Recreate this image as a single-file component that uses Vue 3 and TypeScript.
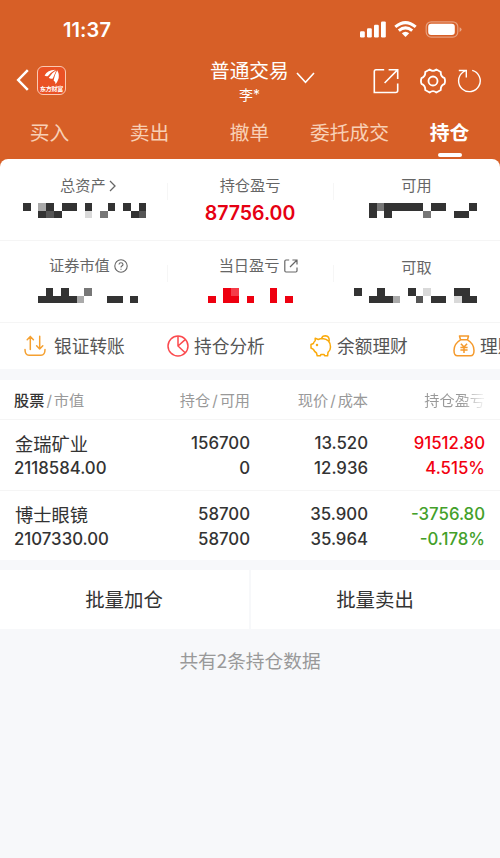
<script setup lang="ts">
interface Cell { x: number; y: number; c: string }
interface Holding {
  name: string
  value: string
  amount: string
  usable: string
  price: string
  cost: string
  profit: string
  rate: string
  trend: 'up' | 'down'
}

const SIZE = 7.7
const shades: Record<string, string> = {
  d: '#333333', m: '#555555', g: '#777777', l: '#aaaaaa', w: '#d9d9d9', r: '#ee0010', p: '#f53c48',
}

// Each mask is two rows of cells; a dot is an empty cell.
function mask(rows: string[]): Cell[] {
  const cells: Cell[] = []
  rows.forEach((row, y) => {
    row.split('').forEach((key, x) => {
      if (key !== '.') cells.push({ x: x * SIZE, y: y * SIZE, c: shades[key] })
    })
  })
  return cells
}

const masks = {
  total: mask(['d.ld.dd.d..d.d.d', '..dmd...w.g...dm']),
  market: mask(['.d.d..g......', 'dddddl...dd.d']),
  today: mask(['..rp....r..', 'r.rr.r..r.r']),
  usable: mask(['dgddddd.dd...d', 'd.d....g...dd.']),
  cash: mask(['d..d...d.w...dd.', '..dddl..m.dd.wdd']),
}

const tabs: string[] = ['买入', '卖出', '撤单', '委托成交', '持仓']

const holdings: Holding[] = [
  { name: '金瑞矿业', value: '2118584.00', amount: '156700', usable: '0', price: '13.520', cost: '12.936', profit: '91512.80', rate: '4.515%', trend: 'up' },
  { name: '博士眼镜', value: '2107330.00', amount: '58700', usable: '58700', price: '35.900', cost: '35.964', profit: '-3756.80', rate: '-0.178%', trend: 'down' },
]
</script>

<template>
  <div class="page">
    <header class="head">
      <div class="status">
        <span class="clock">11:37</span>
        <svg class="status-icons" width="104" height="20" viewBox="0 0 104 20">
          <g fill="#fff">
            <rect x="0" y="11.2" width="4.8" height="6.2" rx="1.2" />
            <rect x="7" y="8.2" width="4.8" height="9.2" rx="1.2" />
            <rect x="14" y="4.8" width="4.8" height="12.6" rx="1.2" />
            <rect x="21" y="1.4" width="4.8" height="16" rx="1.2" />
            <path d="M45.5 17 L41.8 13.2 Q45.5 10.1 49.2 13.2 Z" />
            <rect x="68.2" y="3.8" width="26.6" height="11.3" rx="3" />
          </g>
          <g fill="none" stroke="#fff" stroke-width="3">
            <path d="M35.3 6.9 Q45.5 -1.7 55.7 6.9" />
            <path d="M38.8 10.7 Q45.5 5 52.2 10.7" />
          </g>
          <rect x="66.2" y="1.8" width="31.6" height="15.3" rx="5" fill="none" stroke="#fff" stroke-opacity=".4" stroke-width="1.2" />
          <path d="M99.6 7.2 Q101.6 8 101.6 9.5 T99.6 11.9 Z" fill="#fff" fill-opacity=".45" />
        </svg>
      </div>

      <div class="nav">
        <div class="nav-left">
          <svg width="13" height="22" viewBox="0 0 13 22"><path d="M11.8 1.2 L2.2 11 L11.8 20.8" fill="none" stroke="#fff" stroke-width="2.5" /></svg>
          <span class="logo">
            <svg width="18" height="16" viewBox="0 0 18 16" fill="#fff">
              <path d="M1.6 6.4 Q4.4 1.2 12.4 .8 Q7.6 3.6 5 7 Q2.9 7.6 1.6 6.4Z" />
              <path d="M5.8 8.7 Q8.4 3.8 13.3 1.2 Q11.8 4.7 9.8 9.6 Q7.3 10.4 5.8 8.7Z" />
              <path d="M10.6 11.4 Q11.7 5.5 14.2 1.2 Q17 6 15 11 Q14 13.6 12.6 15.2 Q12.7 12.6 10.6 11.4Z" />
            </svg>
            <span class="logo-text">东方财富</span>
          </span>
        </div>
        <div class="account">
          <div class="account-name">普通交易<svg width="19" height="12" viewBox="0 0 19 12"><path d="M1 1 L9.5 10.4 L18 1" fill="none" stroke="#fff" stroke-width="1.6" /></svg></div>
          <div class="account-user">李*</div>
        </div>
        <div class="nav-right">
          <svg width="26" height="26" viewBox="0 0 26 26" fill="none" stroke="#fff" stroke-width="1.6">
            <path d="M11.2 1.7 H3 Q1.3 1.7 1.3 3.4 V24.5 H22.7 Q24.7 24.5 24.7 22.5 V15.5" />
            <path d="M15.6 1.7 H24.7 V11 M24.5 1.9 L11.6 15" />
          </svg>
          <svg class="gear" width="26" height="26" viewBox="0 0 27 27" fill="none" stroke="#fff" stroke-width="1.9" stroke-linejoin="round">
            <path d="M10 1.6 Q13.5 4.3 17 1.6 L21.6 4.2 Q21.1 8.6 25.5 10.6 Q26.5 13.5 25.5 16.4 Q21.1 18.4 21.6 22.8 L17 25.4 Q13.5 22.7 10 25.4 L5.4 22.8 Q5.9 18.4 1.5 16.4 Q.5 13.5 1.5 10.6 Q5.9 8.6 5.4 4.2 Z" />
            <circle cx="13.5" cy="13.5" r="4.7" />
          </svg>
          <svg class="refresh" width="25" height="25" viewBox="0 0 25 25" fill="none" stroke="#fff" stroke-width="1.4">
            <path d="M15.2 2.4 A10.8 10.8 0 1 1 6.2 4 L8.9 2.5 M1.8 2.5 H9.3 V9.4" />
          </svg>
        </div>
      </div>

      <nav class="tabs">
        <span v-for="(tab, i) in tabs" :key="tab" class="tab" :class="{ active: i === 4 }">{{ tab }}</span>
      </nav>
    </header>

    <section class="summary">
      <div class="sum-row">
        <div class="sum-cell first">
          <div class="label">总资产<svg width="9" height="12" viewBox="0 0 9 12"><path d="M2 1 L7 6 L2 11" fill="none" stroke="#666" stroke-width="1.3" /></svg></div>
          <svg class="mask total" width="124" height="16"><rect v-for="(p, i) in masks.total" :key="i" :x="p.x" :y="p.y" width="7.7" height="7.7" :fill="p.c" /></svg>
        </div>
        <div class="sum-cell">
          <div class="label">持仓盈亏</div>
          <div class="gain">87756.00</div>
        </div>
        <div class="sum-cell">
          <div class="label">可用</div>
          <svg class="mask usable" width="108" height="16"><rect v-for="(p, i) in masks.usable" :key="i" :x="p.x" :y="p.y" width="7.7" height="7.7" :fill="p.c" /></svg>
        </div>
      </div>
      <div class="sum-row second">
        <div class="sum-cell first">
          <div class="label">证券市值<svg class="help" width="14" height="14" viewBox="0 0 14 14" fill="none" stroke="#666" stroke-width="1.1"><circle cx="7" cy="7" r="6.2" /><path d="M5 5.5 Q5 3.7 7 3.7 Q9 3.7 9 5.4 Q9 6.4 7.8 7 Q7 7.5 7 8.5" /><path d="M7 9.7 V10.8" /></svg></div>
          <svg class="mask market" width="101" height="16"><rect v-for="(p, i) in masks.market" :key="i" :x="p.x" :y="p.y" width="7.7" height="7.7" :fill="p.c" /></svg>
        </div>
        <div class="sum-cell">
          <div class="label wide">当日盈亏<svg class="jump" width="14" height="14" viewBox="0 0 14 14" fill="none" stroke="#666" stroke-width="1.2"><path d="M5.2 1 H2 Q.8 1 .8 2.2 V11.8 Q.8 13 2 13 H11.8 Q13 13 13 11.8 V8.6 M8.4 1 H13 V5.6 M13 1 L6 8" /></svg></div>
          <svg class="mask today" width="85" height="16"><rect v-for="(p, i) in masks.today" :key="i" :x="p.x" :y="p.y" width="7.7" height="7.7" :fill="p.c" /></svg>
        </div>
        <div class="sum-cell">
          <div class="label low">可取</div>
          <svg class="mask cash" width="124" height="16"><rect v-for="(p, i) in masks.cash" :key="i" :x="p.x" :y="p.y" width="7.7" height="7.7" :fill="p.c" /></svg>
        </div>
      </div>
    </section>

    <section class="tools">
      <div class="tool">
        <svg width="22" height="22" viewBox="0 0 22 22" fill="none" stroke="#f5a030" stroke-width="1.5" stroke-linecap="round" stroke-linejoin="round"><path d="M1 14.5 Q1 20.2 5 20.2 H17 Q21 20.2 21 14.5 M6.3 14.5 V1.6 M3.2 4.8 L6.3 1.6 L9.4 4.8 M15.7 1.2 V14 M12.6 10.8 L15.7 14 L18.8 10.8" /></svg>
        <span>银证转账</span>
      </div>
      <div class="tool t2">
        <svg width="22" height="22" viewBox="0 0 22 22" fill="none" stroke="#fb4a4e" stroke-width="1.5"><circle cx="11" cy="11" r="10" /><path d="M11 1 V11 L18.4 18 M11 11 L18.2 4.6" /></svg>
        <span>持仓分析</span>
      </div>
      <div class="tool t3">
        <svg width="22" height="22" viewBox="0 0 22 22" fill="none" stroke="#faaa0c" stroke-width="1.5" stroke-linejoin="round"><path d="M5.2 3.3 L8.3 4.5 Q10 3.6 12.5 3.6 Q20.5 4.6 20.5 12 Q20.5 15.5 18 17.4 L17.6 20.8 H14.6 L14 19.4 H11 L10.3 20.8 H7.2 L6.5 18 Q4.3 16.6 3.4 14.4 L1 13 V9.5 L3.4 8.5 Q3.8 7 5.2 5.8 Z M11.5 3.6 Q12.2 .8 15.5 .8 Q19.6 1.2 19.2 6.3" /><circle cx="7" cy="10" r=".5" fill="#faaa0c" /></svg>
        <span>余额理财</span>
      </div>
      <div class="tool t4">
        <svg width="22" height="22" viewBox="0 0 22 22" fill="none" stroke="#f59a2c" stroke-width="1.5" stroke-linejoin="round"><path d="M6.5 1 H15.5 L14.5 4.7 H7.5 Z M7.5 4.8 Q1 8.6 1 15.4 Q1 20.8 4.5 20.8 H17.5 Q21 20.8 21 15.4 Q21 8.6 14.5 4.8 M7.9 8.7 L11 12 L14.1 8.7 M11 12 V18 M7.4 12.4 H14.6 M7.4 15 H14.6" /></svg>
        <span>理财</span>
      </div>
    </section>

    <section class="table">
      <div class="row thead">
        <div class="c1"><b>股票</b><i>/</i>市值</div>
        <div>持仓<i>/</i>可用</div>
        <div>现价<i>/</i>成本</div>
        <div class="fade">持仓盈亏</div>
      </div>
      <div v-for="h in holdings" :key="h.name" class="row item">
        <div class="c1"><p class="name">{{ h.name }}</p><p>{{ h.value }}</p></div>
        <div><p>{{ h.amount }}</p><p>{{ h.usable }}</p></div>
        <div><p>{{ h.price }}</p><p>{{ h.cost }}</p></div>
        <div :class="h.trend"><p>{{ h.profit }}</p><p>{{ h.rate }}</p></div>
      </div>
    </section>

    <section class="actions">
      <div class="action">批量加仓</div>
      <div class="action">批量卖出</div>
    </section>
    <footer class="foot">共有<span class="count">2</span>条持仓数据</footer>
  </div>
</template>

<style>
body { margin: 0; background: #f7f8fa; }
</style>

<style scoped>
.page { width: 500px; height: 858px; overflow: hidden; background: #f7f8fa; font-family: Inter, "Noto Sans CJK SC", sans-serif; color: #333; box-sizing: border-box; }
.page * { box-sizing: border-box; }
svg { display: block; flex: none; }
p { margin: 0; }

.head { height: 171px; background: #d75f27; color: #fff; }
.status { height: 56px; padding: 20px 37px 0 63px; display: flex; justify-content: space-between; }
.clock { font-size: 20px; line-height: 21px; font-weight: 600; letter-spacing: .1px; }
.status-icons { margin-right: -1px; }
.nav { height: 54px; display: grid; grid-template-columns: 200px 125px 175px; }
.nav-left { display: flex; align-items: flex-start; padding: 13px 0 0 16px; }
.logo { width: 29px; height: 29px; margin: -3px 0 0 8px; border: 1px solid #fac9b2; border-radius: 6px; background: #ea5124; display: flex; flex-direction: column; align-items: center; padding-top: 2px; }
.logo-text { font: 700 6px/8px "Noto Sans CJK SC", sans-serif; white-space: nowrap; letter-spacing: -.3px; }
.account { padding-left: 10px; }
.account-name { display: flex; align-items: center; gap: 7px; height: 30px; font-size: 19.7px; line-height: 31px; white-space: nowrap; }
.account-name svg { margin-top: 14px; }
.account-user { width: 79px; text-align: center; font-size: 14px; line-height: 18px; }
.nav-right { display: flex; padding: 12px 0 0 48px; }
.gear { margin-left: 21px; }
.refresh { margin-left: 11px; }
.tabs { display: grid; grid-template-columns: repeat(5, 100px); margin-left: -.5px; }
.tab { height: 49px; line-height: 47px; text-align: center; font-size: 19.8px; color: #f8d0b6; font-weight: 400; }
.tab.active { color: #fff; font-weight: 700; display: flex; flex-direction: column; align-items: center; }
.tab.active::after { content: ""; width: 24px; height: 4px; border-radius: 2px; background: #fff; margin-top: -4px; }

.summary { height: 164px; margin-top: -12px; background: #fff; border-radius: 8px 8px 0 0; }
.sum-row { height: 82px; display: grid; grid-template-columns: 167px 166px 167px; border-bottom: 1px solid #f5f5f5; }
.sum-cell { display: flex; flex-direction: column; align-items: center; padding-top: 15px; position: relative; }
.sum-cell + .sum-cell::before { content: ""; position: absolute; left: 0; top: 24px; width: 1px; height: 17px; background: #f6f6f6; }
.sum-cell.first { align-items: flex-start; }
.label { height: 24px; line-height: 24px; font-size: 15.2px; color: #666; display: flex; align-items: center; white-space: nowrap; }
.first .label { padding-left: 60px; }
.second .first .label { padding-left: 49px; }
.label svg { margin-left: 2px; }
.label .help { margin-left: 4px; }
.label .jump { margin-left: 5px; }
.label.wide { padding-left: 17px; }
.label.low { padding-top: 3px; }
.mask { margin-top: 4.5px; shape-rendering: crispEdges; }
.total { margin-left: 23px; }
.market { margin-left: 38.4px; }
.usable { margin-left: 13px; }
.cash { margin-left: -1.5px; }
.gain { color: #e60012; font-size: 19.5px; line-height: 24px; margin-top: 2.5px; font-weight: 600; }
.second .sum-cell { padding-top: 13px; }
.second .mask { margin-top: 9.5px; }

.tools { height: 46px; background: #fff; display: flex; padding-left: 24px; overflow: hidden; }
.tool { display: flex; align-items: center; gap: 8px; width: 143px; flex: none; font-size: 17.7px; line-height: 24px; color: #555; padding-bottom: 1px; }
.t2, .t3, .t4 { gap: 5px; }
.tool span { white-space: nowrap; padding-top: 3px; }

.table { margin-top: 11px; background: #fff; height: 180px; }
.row { display: grid; grid-template-columns: 125px 125px 118px 117px; text-align: right; }
.c1 { text-align: left; padding-left: 14px; }
.thead { height: 40px; line-height: 41px; font-size: 15.2px; color: #999; border-bottom: 1px solid #f5f5f5; }
.thead i { font-style: normal; margin: 0 2px; }
.thead b { color: #333; font-weight: 500; }
.fade { color: transparent; background: linear-gradient(90deg, #999 80%, #eee 98%); background-clip: text; }
.item { height: 70px; padding-top: 11px; font-size: 16.8px; line-height: 24.5px; font-weight: 500; }
.item + .item { border-top: 1px solid #f5f5f5; }
.c1 .name { font-size: 18.3px; font-weight: 400; height: 24.5px; line-height: 27px; padding-left: 1px; }
.up { color: #f2000f; }
.down { color: #43a02a; }

.actions { margin-top: 10px; height: 59px; display: grid; grid-template-columns: 249px 249px; gap: 2px; }
.action { background: #fff; text-align: center; height: 59px; padding: 1px 1px 0 0; line-height: 58px; font-size: 19.4px; }
.foot { text-align: center; line-height: 24px; margin-top: 19px; font-size: 18.7px; color: #999; }
.count { font-family: "Noto Sans CJK SC", sans-serif; }
</style>
